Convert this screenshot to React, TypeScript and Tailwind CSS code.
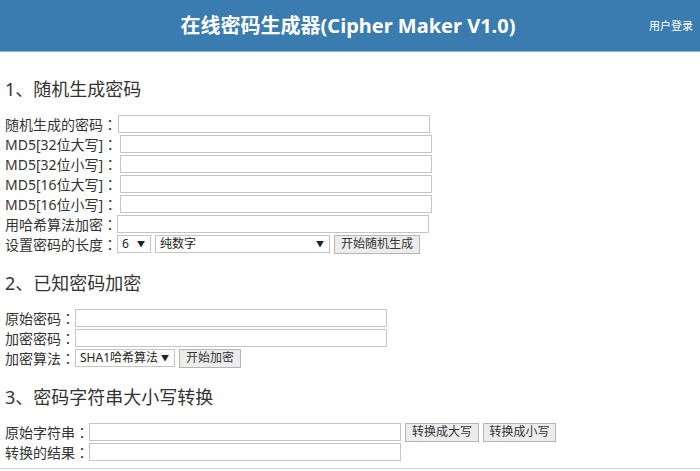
import React from "react";

const font = { fontFamily: '"Noto Sans", "Noto Sans CJK SC", sans-serif' };
const colonFont = { fontFamily: '"Noto Sans CJK TC", sans-serif' };

function TextBox() {
  return <div className="w-[312px] h-[18px] border border-[#c4c4c4] bg-white" />;
}

function Sel({ w, text }: { w: string; text: string }) {
  return (
    <div className={`${w} h-[18px] border border-[#c4c4c4] bg-white flex items-center justify-between pl-[4px] pr-[5px] text-[12px] text-[#222] leading-none`}>
      <span>{text}</span>
      <span className="text-[8px]">▼</span>
    </div>
  );
}

function Btn({ w, text }: { w: string; text: string }) {
  return (
    <div className={`${w} h-[19px] border border-[#b5b5b5] bg-[#ececec] flex items-center justify-center text-[12px] text-[#333] leading-none`}>
      {text}
    </div>
  );
}

function Row({ label, lw, children }: { label: string; lw: string; children: React.ReactNode }) {
  return (
    <div className="h-[20px] flex items-center">
      <span className={`${lw} shrink-0 text-[14px] leading-none text-[#333] whitespace-nowrap`}>
        {label}
        <span style={colonFont}>：</span>
      </span>
      {children}
    </div>
  );
}

function Heading({ text, mt }: { text: string; mt: string }) {
  return (
    <div className={`${mt} mb-[13px] h-[24px] flex items-center text-[18px] leading-none text-[#333]`}>{text}</div>
  );
}

export default function App() {
  return (
    <div className="w-[700px] h-[471px] bg-white overflow-hidden" style={font}>
      <header className="h-[52px] bg-[#3b7cb0] border-b border-[#8db4d4] flex items-center relative">
        <div className="flex-1 text-center text-white font-bold text-[20px] leading-none pr-[4px]">
          在线密码生成器(Cipher Maker V1.0)
        </div>
        <div className="absolute right-[7px] top-[20px] text-white text-[11px] leading-none">用户登录</div>
      </header>
      <main className="pl-[5px]">
        <Heading text="1、随机生成密码" mt="mt-[25px]" />
        <Row label="随机生成的密码" lw="w-[113px]"><TextBox /></Row>
        <Row label="MD5[32位大写]" lw="w-[115px]"><TextBox /></Row>
        <Row label="MD5[32位小写]" lw="w-[115px]"><TextBox /></Row>
        <Row label="MD5[16位大写]" lw="w-[115px]"><TextBox /></Row>
        <Row label="MD5[16位小写]" lw="w-[115px]"><TextBox /></Row>
        <Row label="用哈希算法加密" lw="w-[112px]"><TextBox /></Row>
        <Row label="设置密码的长度" lw="w-[112px]">
          <div className="flex items-center gap-[4px]">
            <Sel w="w-[34px]" text="6" />
            <Sel w="w-[175px]" text="纯数字" />
            <Btn w="w-[86px]" text="开始随机生成" />
          </div>
        </Row>

        <Heading text="2、已知密码加密" mt="mt-[17px]" />
        <Row label="原始密码" lw="w-[70px]"><TextBox /></Row>
        <Row label="加密密码" lw="w-[70px]"><TextBox /></Row>
        <Row label="加密算法" lw="w-[70px]">
          <div className="flex items-center gap-[4px]">
            <Sel w="w-[100px]" text="SHA1哈希算法" />
            <Btn w="w-[62px]" text="开始加密" />
          </div>
        </Row>

        <Heading text="3、密码字符串大小写转换" mt="mt-[17px]" />
        <Row label="原始字符串" lw="w-[84px]">
          <div className="flex items-center gap-[4px]">
            <TextBox />
            <Btn w="w-[74px]" text="转换成大写" />
            <Btn w="w-[73px]" text="转换成小写" />
          </div>
        </Row>
        <Row label="转换的结果" lw="w-[84px]"><TextBox /></Row>
      </main>
      <div className="mt-[6px] border-t border-[#d8d8d8]" />
    </div>
  );
}
